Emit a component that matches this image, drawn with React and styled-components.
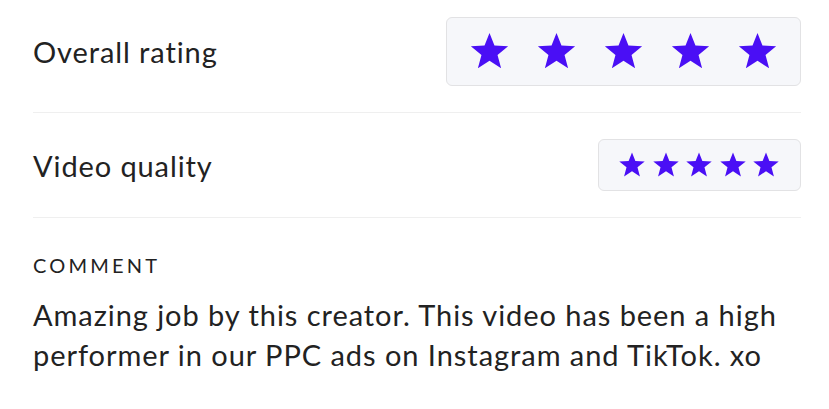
import React from 'react';
import styled, {createGlobalStyle} from 'styled-components';

const GlobalStyle = createGlobalStyle`
    html, body {
        margin: 0;
        padding: 0;
        background: #ffffff;
    }
    body {
        font-family: "Lato", "Open Sans", sans-serif;
        color: #222222;
    }
`;

const Wrapper = styled.div`
    padding: 0 28px 0 33px;
`;

const RatingRow = styled.div`
    display: flex;
    align-items: center;
    justify-content: space-between;
    padding: ${({first}) => (first ? '17px 0 26px' : '26px 0')};
    border-bottom: 1.5px solid #efefef;
`;

const Label = styled.span`
    font-size: 29px;
    letter-spacing: 0.9px;
`;

const StarBox = styled.div`
    display: flex;
    align-items: center;
    gap: ${({big}) => (big ? '26px' : '5.5px')};
    height: ${({big}) => (big ? '67px' : '50px')};
    padding: ${({big}) => (big ? '0 22px 0 22px' : '0 20px 0 19px')};
    background: #f6f7fa;
    border: 1.5px solid #e2e2e4;
    border-radius: 6px;
`;

const CommentBlock = styled.div`
    padding-top: 35px;
`;

const CommentTitle = styled.div`
    font-size: 20px;
    line-height: 24px;
    letter-spacing: 3.2px;
    margin-bottom: 18px;
`;

const CommentText = styled.p`
    margin: 0;
    font-size: 29px;
    line-height: 40px;
    letter-spacing: 0.95px;
`;

const Star = ({size}) => (
    <svg width={size} height={size} viewBox="0 0 24 24">
        <polygon
            fill="#4a0ff5"
            points="12,1.2 14.9,8.5 22.9,8.9 16.7,14 18.8,21.8 12,17.4 5.2,21.8 7.3,14 1.1,8.9 9.1,8.5"
        />
    </svg>
);

const ratings = [
    {label: 'Overall rating', big: true},
    {label: 'Video quality', big: false},
];

const App = () => (
    <Wrapper>
        <GlobalStyle />
        {ratings.map(({label, big}, key) => (
            <RatingRow key={key} first={key === 0}>
                <Label>{label}</Label>
                <StarBox big={big}>
                    {[0, 1, 2, 3, 4].map(i => <Star key={i} size={big ? 41 : 28} />)}
                </StarBox>
            </RatingRow>
        ))}
        <CommentBlock>
            <CommentTitle>COMMENT</CommentTitle>
            <CommentText>
                Amazing job by this creator. This video has been a high performer in our PPC ads on Instagram and TikTok. xo
            </CommentText>
        </CommentBlock>
    </Wrapper>
);

export default App;
